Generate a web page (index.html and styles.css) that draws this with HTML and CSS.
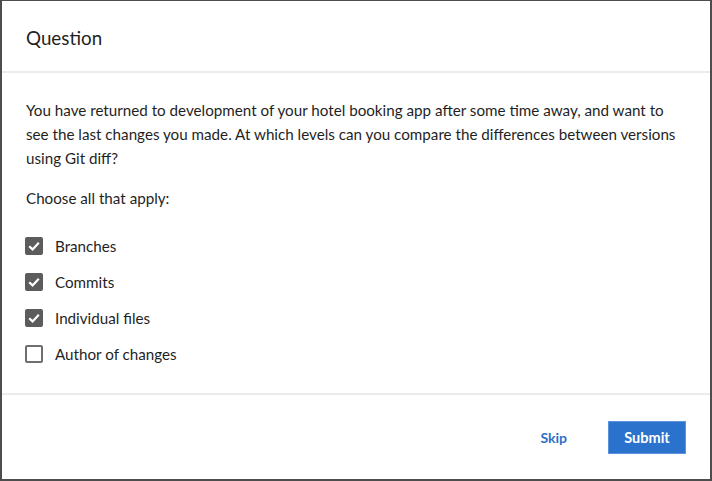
FILE: index.html
```html
<!DOCTYPE html>
<html>
<head>
<meta charset="utf-8">
<link rel="stylesheet" href="styles.css">
</head>
<body>
<div class="modal">
  <header class="modal-header"><h1 class="title">Question</h1></header>
  <main class="modal-body">
    <p class="question">You have returned to development of your hotel booking app after some time away, and want to see the last changes you made. At which levels can you compare the differences between versions using Git diff?</p>
    <p class="hint">Choose all that apply:</p>
    <ul class="options">
      <li class="option"><span class="box checked"><svg viewBox="0 0 18 18" width="18" height="18"><path d="M4.2 9.2 L7.6 12.4 L13.8 5.8" fill="none" stroke="#fff" stroke-width="2.2"/></svg></span><span class="label">Branches</span></li>
      <li class="option"><span class="box checked"><svg viewBox="0 0 18 18" width="18" height="18"><path d="M4.2 9.2 L7.6 12.4 L13.8 5.8" fill="none" stroke="#fff" stroke-width="2.2"/></svg></span><span class="label">Commits</span></li>
      <li class="option"><span class="box checked"><svg viewBox="0 0 18 18" width="18" height="18"><path d="M4.2 9.2 L7.6 12.4 L13.8 5.8" fill="none" stroke="#fff" stroke-width="2.2"/></svg></span><span class="label">Individual files</span></li>
      <li class="option"><span class="box"></span><span class="label">Author of changes</span></li>
    </ul>
  </main>
  <footer class="modal-footer">
    <button class="btn-skip">Skip</button>
    <button class="btn-submit">Submit</button>
  </footer>
</div>
</body>
</html>
```
FILE: styles.css
```css
* { box-sizing: border-box; }
html, body { margin: 0; padding: 0; }
body {
  background: #4d4d4d;
  width: 712px;
  height: 481px;
  overflow: hidden;
  font-family: Lato, "Open Sans", sans-serif;
  color: #1f1f1f;
}
.modal {
  margin: 1px 0 0 2px;
  width: 708px;
  height: 478px;
  background: #fff;
  display: flex;
  flex-direction: column;
}
.modal-header {
  height: 72px;
  padding: 3px 24px 0 24px;
  display: flex;
  align-items: center;
  border-bottom: 2px solid #ebebeb;
}
.title {
  margin: 0;
  font-size: 18.8px;
  font-weight: 400;
  color: #1f1f1f;
}
.modal-body {
  padding: 25px 24px 21px 24px;
  border-bottom: 2px solid #ebebeb;
}
.question {
  margin: 0;
  font-size: 15.2px;
  line-height: 24px;
}
.hint {
  margin: 16px 0 0 0;
  font-size: 15.2px;
  line-height: 24px;
}
.options {
  list-style: none;
  margin: 18px 0 0 0;
  padding: 0;
}
.option {
  height: 36px;
  display: flex;
  align-items: center;
  font-size: 15.2px;
}
.box {
  width: 18px;
  height: 18px;
  border: 2px solid #6f6f6f;
  border-radius: 2px;
  margin-left: -1px;
  margin-right: 12px;
  display: flex;
  align-items: center;
  justify-content: center;
}
.box.checked {
  background: #5c5c5c;
  border-color: #5c5c5c;
}
.box svg { display: block; flex: none; }
.label { color: #1f1f1f; }
.modal-footer {
  flex: 1;
  display: flex;
  align-items: center;
  justify-content: flex-end;
  padding: 0 24px 0 0;
  gap: 33px;
}
.btn-skip {
  background: none;
  border: none;
  font-family: Lato, sans-serif;
  font-weight: 700;
  font-size: 14px;
  color: #2d6fc6;
  padding: 0 8px;
  cursor: pointer;
}
.btn-submit {
  width: 78px;
  height: 33px;
  background: #2a72cc;
  border: 1px solid #5a94dc;
  color: #fff;
  font-family: Lato, sans-serif;
  font-weight: 700;
  font-size: 14.5px;
  padding: 0;
  cursor: pointer;
}
```
